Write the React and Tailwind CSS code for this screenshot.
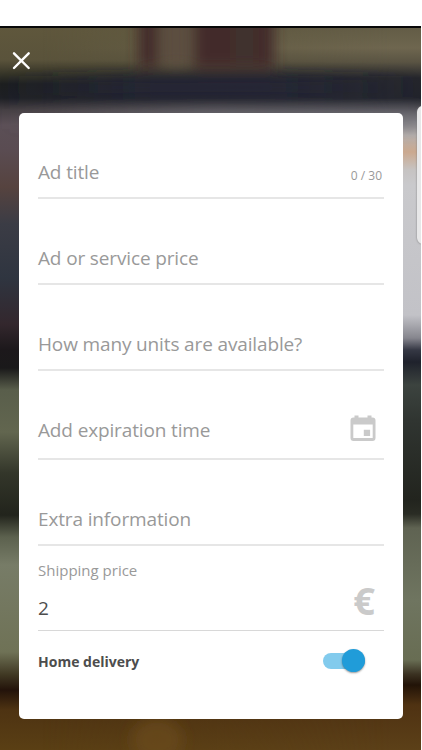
import React from "react";

const LEFT = [
  [28, "#5f573c"], [60, "#5a533b"], [74, "#363528"], [84, "#1d1f20"], [98, "#1e2025"], [110, "#453f43"],
  [125, "#5b4f56"], [150, "#5a4c52"], [187, "#56433f"], [224, "#3b3c45"], [278, "#2f3540"], [324, "#33272d"],
  [350, "#1c181b"], [368, "#1a191a"], [390, "#595e4b"], [432, "#62664f"], [473, "#33362a"], [515, "#22241c"],
  [537, "#5c614e"], [565, "#777c67"], [652, "#6f7256"], [675, "#3f3722"], [690, "#23130a"], [710, "#4e3312"],
  [750, "#5a3f14"],
];
const RIGHT = [
  [28, "#635c46"], [48, "#6e664f"], [62, "#5a5443"], [78, "#25262c"], [98, "#22242c"], [108, "#49484f"],
  [122, "#8d8b8e"], [135, "#b5afad"], [152, "#cba98f"], [170, "#c6c3c2"], [185, "#c9c9cc"], [315, "#c2c2c7"],
  [338, "#86868e"], [350, "#353844"], [362, "#1f222c"], [385, "#3c433f"], [420, "#303531"], [500, "#22241e"],
  [514, "#2a2c24"], [528, "#5f6352"], [600, "#6f7560"], [660, "#686d53"], [674, "#3b3222"], [685, "#221307"],
  [705, "#4f3212"], [750, "#5c4018"],
];

function Stops({ list }) {
  return list.map(([y, c]) => <stop key={y} offset={(y - 28) / 722} stopColor={c} />);
}

function Backdrop() {
  return (
    <svg className="absolute left-0 top-0 h-[722px] w-[421px]" viewBox="0 28 421 722" aria-hidden="true">
      <defs>
        <linearGradient id="left" x1="0" y1="0" x2="0" y2="1"><Stops list={LEFT} /></linearGradient>
        <linearGradient id="right" x1="0" y1="0" x2="0" y2="1"><Stops list={RIGHT} /></linearGradient>
        <linearGradient id="fade" x1="0" y1="0" x2="1" y2="0">
          <stop offset="0.1" stopColor="#000" /><stop offset="0.93" stopColor="#fff" />
        </linearGradient>
        <linearGradient id="navy" x1="0" y1="0" x2="1" y2="0">
          <stop offset="0" stopColor="#242638" stopOpacity="0" />
          <stop offset="0.35" stopColor="#242638" stopOpacity="0.85" />
          <stop offset="0.65" stopColor="#242638" stopOpacity="0.85" />
          <stop offset="1" stopColor="#242638" stopOpacity="0" />
        </linearGradient>
        <linearGradient id="haze" x1="0" y1="0" x2="1" y2="0">
          <stop offset="0" stopColor="#6a6970" stopOpacity="0" />
          <stop offset="0.5" stopColor="#6a6970" stopOpacity="0.8" />
          <stop offset="1" stopColor="#6a6970" stopOpacity="0.5" />
        </linearGradient>
        <mask id="blend"><rect x="0" y="28" width="421" height="722" fill="url(#fade)" /></mask>
        <filter id="soft" x="-30%" y="-30%" width="160%" height="160%"><feGaussianBlur stdDeviation="6.5" /></filter>
      </defs>
      <rect y="28" width="421" height="722" fill="url(#left)" />
      <rect y="28" width="421" height="722" fill="url(#right)" mask="url(#blend)" />
      <g filter="url(#soft)">
        <rect x="139" y="0" width="19" height="68" fill="#422c2b" />
        <rect x="161" y="0" width="30" height="66" fill="#5c4e40" />
        <rect x="194" y="0" width="80" height="69" fill="#432c2a" />
        <rect x="236" y="0" width="17" height="62" fill="#40352f" />
        <rect x="0" y="76" width="421" height="23" fill="url(#navy)" />
        <rect x="0" y="109" width="421" height="20" fill="url(#haze)" />
      </g>
      <g filter="url(#soft)">
        <ellipse cx="157" cy="740" rx="26" ry="22" fill="#6c4c18" opacity="0.65" />
      </g>
    </svg>
  );
}

function Field({ label, tall, children }) {
  return (
    <div className={`flex ${tall ? "h-[89px]" : "h-[86px]"} justify-between border-b-2 border-[#e6e6e6]`}>
      <span className="pt-[45px] text-[19px] leading-[28px] tracking-[-0.14px] text-[#999]">{label}</span>
      {children}
    </div>
  );
}

export default function App() {
  return (
    <div className="h-[750px] w-[422px] overflow-hidden bg-white pt-[26px] font-['Open_Sans',sans-serif]">
      <div className="relative h-[724px] w-[421px] overflow-hidden border-t-2 border-[#080808]">
        <Backdrop />
        <div className="absolute -right-2 top-[78px] h-[138px] w-3 rounded-l-md bg-[#e7e7e8] shadow-[0_0_2px_#777]" />
        <div className="relative flex h-[85px] pl-[12px] pt-[23px]">
          <svg className="size-[19px]" viewBox="0 0 19 19" fill="none" stroke="white" strokeWidth="2.4" strokeLinecap="round" aria-label="Close">
            <path d="M2 2.300L16.7 17M16.7 2.300L2 17" />
          </svg>
        </div>
        <main className="relative ml-[19px] h-[605.500px] w-[384px] rounded-[5px] bg-white pl-[19px] pr-[19px]">
          <Field label="Ad title">
            <span className="pr-[2px] pt-[54px] text-[12px] leading-[18px] text-[#999]">0 / 30</span>
          </Field>
          <Field label="Ad or service price" />
          <Field label="How many units are available?" />
          <Field label="Add expiration time" tall>
            <svg className="mr-[8px] mt-[43.500px] h-[27px] w-[26px]" viewBox="0 0 26 27" aria-hidden="true">
              <path fill="#cacaca" fillRule="evenodd" d="M4.5 0.5h4v2h9v-2h4v2h1a3 3 0 0 1 3 3v17.500a3 3 0 0 1-3 3h-19a3 3 0 0 1-3-3v-17.500a3 3 0 0 1 3-3h1zM3.300 9.500v13.500h19.400v-13.500zM13.800 14.700h6.300v6.300h-6.300z" />
            </svg>
          </Field>
          <Field label="Extra information" />
          <div className="flex h-[85px] justify-between border-b border-[#d8d8d8]">
            <div className="flex flex-col">
              <span className="pt-[12px] text-[15px] leading-[24px] text-[#999]">Shipping price</span>
              <span className="pt-[12px] text-[19px] leading-[28px] text-[#4d4d4d]">2</span>
            </div>
            <span className="pr-[9px] pt-[28px] text-[38px] font-bold leading-[52px] text-[#cacaca]">€</span>
          </div>
          <div className="flex h-[60px] items-center justify-between pr-[19px]">
            <span className="pt-px text-[14px] font-bold leading-[20px] text-[#4d4d4d]">Home delivery</span>
            <div className="-mt-px flex h-4 w-[42px] items-center justify-end rounded-full bg-[#82cbed]">
              <div className="size-[23px] shrink-0 rounded-full bg-[#209cd9] shadow-[0_1px_2px_rgba(0,0,0,0.4)]" />
            </div>
          </div>
        </main>
      </div>
    </div>
  );
}
